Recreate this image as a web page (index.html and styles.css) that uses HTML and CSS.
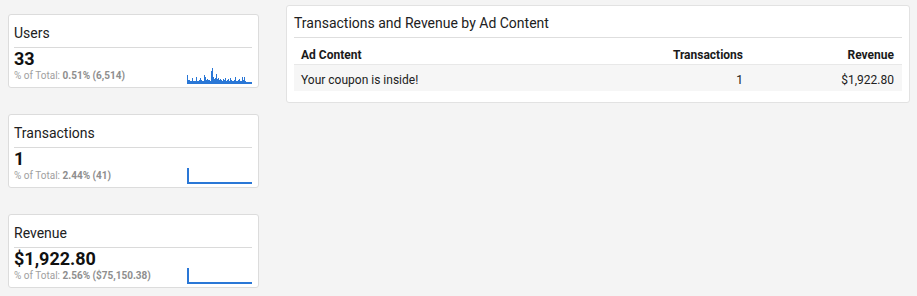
FILE: index.html
```html
<!DOCTYPE html>
<html lang="en">

<head>
    <meta charset="UTF-8">
    <meta name="viewport" content="width=device-width, initial-scale=1.0">
    <title>Ad Content Report</title>

    <link rel="stylesheet" href="styles.css">

</head>

<body>

    <div class="dashboard">
        <div class="scorecards">
            <div class="card">
                <div class="card-title">Users</div>
                <div class="card-body">
                    <div class="card-values">
                        <div class="card-number">33</div>
                        <div class="card-sub">% of Total: <b>0.51% (6,514)</b></div>
                    </div>
                    <svg class="spark" width="66" height="16" viewBox="0 0 66 16">
                        <path class="base" d="M1 15H66" />
                        <path d="M1.5 15V7M2.5 15V12M3.5 15V12M4.5 15V13M5.5 15V13M6.5 15V10M7.5 15V13M8.5 15V13M9.5 15V13M10.5 15V9M11.5 15V13M12.5 15V13M13.5 15V12M14.5 15V10M15.5 15V12M16.5 15V13M17.5 15V13M18.5 15V7M19.5 15V9M20.5 15V12M21.5 15V11M22.5 15V12M23.5 15V12M24.5 15V13M25.5 15V3M26.5 15V0M27.5 15V9M28.5 15V11M29.5 15V10M30.5 15V6M31.5 15V11M32.5 15V10M33.5 15V12M34.5 15V11M35.5 15V12M36.5 15V13M37.5 15V11M38.5 15V12M39.5 15V10M40.5 15V13M41.5 15V12M42.5 15V11M43.5 15V13M44.5 15V10M45.5 15V12M46.5 15V13M47.5 15V13M48.5 15V12M49.5 15V9M50.5 15V13M51.5 15V13M52.5 15V12M53.5 15V11M54.5 15V13M55.5 15V13M56.5 15V9M57.5 15V12M58.5 15V9M59.5 15V13" />
                    </svg>
                </div>
            </div>

            <div class="card">
                <div class="card-title">Transactions</div>
                <div class="card-body">
                    <div class="card-values">
                        <div class="card-number">1</div>
                        <div class="card-sub">% of Total: <b>2.44% (41)</b></div>
                    </div>
                    <svg class="spark" width="66" height="16" viewBox="0 0 66 16">
                        <path class="base" d="M2 0V15H66" />
                    </svg>
                </div>
            </div>

            <div class="card">
                <div class="card-title">Revenue</div>
                <div class="card-body">
                    <div class="card-values">
                        <div class="card-number">$1,922.80</div>
                        <div class="card-sub">% of Total: <b>2.56% ($75,150.38)</b></div>
                    </div>
                    <svg class="spark" width="66" height="16" viewBox="0 0 66 16">
                        <path class="base" d="M2 0V15H66" />
                    </svg>
                </div>
            </div>
        </div>

        <div class="panel">
            <div class="panel-title">Transactions and Revenue by Ad Content</div>
            <table class="report">
                <thead>
                    <tr>
                        <th>Ad Content</th>
                        <th class="num col-trans">Transactions</th>
                        <th class="num col-rev">Revenue</th>
                    </tr>
                </thead>
                <tbody>
                    <tr>
                        <td>Your coupon is inside!</td>
                        <td class="num">1</td>
                        <td class="num">$1,922.80</td>
                    </tr>
                </tbody>
            </table>
        </div>
    </div>

</body>

</html>
```

FILE: styles.css
```css
* {
    box-sizing: border-box;
}

html,
body {
    background-color: #f4f4f4;
    margin: 0;
    padding: 0;
    font-family: Roboto, 'Liberation Sans', Arial, sans-serif;
    color: #212121;
}

.dashboard {
    display: grid;
    grid-template-columns: 251px 1fr;
    grid-gap: 27px;
    align-items: start;
    padding: 5px 7px 0 8px;
}

.scorecards {
    display: grid;
    grid-auto-flow: row;
    grid-gap: 26px;
    padding-top: 9px;
}

.card {
    background-color: #fff;
    border: 1px solid #dcdcdc;
    border-radius: 3px;
    padding: 0 6px 3px 5px;
}

.card-title {
    font-size: 14px;
    line-height: 16px;
    padding: 10px 0 6px;
    border-bottom: 1px solid #dadada;
}

.card-body {
    display: flex;
    justify-content: space-between;
    align-items: flex-end;
}

.card-values {
    padding-bottom: 2px;
}

.card-number {
    font-size: 18px;
    line-height: 22px;
    font-weight: bold;
    color: #111;
}

.card-sub {
    font-size: 10px;
    line-height: 12px;
    color: #a0a0a0;
}

.card-sub b {
    color: #8e8e8e;
}

.spark {
    display: block;
    fill: none;
    stroke: #2a77d6;
    stroke-width: 1;
}

.spark .base {
    stroke-width: 2;
}

.panel {
    background-color: #fff;
    border: 1px solid #e2e2e2;
    border-radius: 3px;
    padding: 0 7px 11px;
}

.panel-title {
    font-size: 14px;
    line-height: 16px;
    padding: 9px 0 6px;
    border-bottom: 1px solid #dedede;
}

.report {
    width: 100%;
    border-collapse: collapse;
    font-size: 12px;
    line-height: 14px;
}

.report th {
    text-align: left;
    font-weight: bold;
    color: #1a1a1a;
    padding: 10px 8px 2px 7px;
    border-bottom: 1px solid #e8e8e8;
}

.report td {
    padding: 8px 8px 4px 7px;
    background-color: #f6f6f6;
}

.report .num {
    text-align: right;
}

.col-trans {
    width: 150px;
}

.col-rev {
    width: 151px;
}
```
